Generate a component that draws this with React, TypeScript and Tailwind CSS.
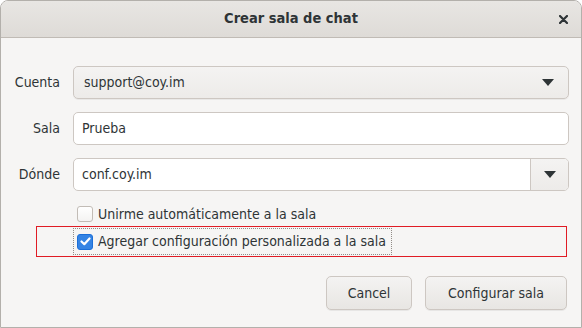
import React from 'react';

const font = { fontFamily: '"DejaVu Sans Condensed", "DejaVu Sans", sans-serif' };

function Arrow() {
    return (
        <svg width="12" height="7" viewBox="0 0 12 7">
            <path d="M0 0 L12 0 L6 7 Z" fill="#2e3436" />
        </svg>
    );
}

function Check() {
    return (
        <svg width="11" height="9" viewBox="0 0 11 9">
            <path d="M1.5 4.5 L4.3 7.2 L9.5 1.5" stroke="#fff" strokeWidth="2.2" fill="none" strokeLinecap="round" strokeLinejoin="round" />
        </svg>
    );
}

export default function App() {
    return (
        <div className="w-[582px] h-[328px] bg-white font-stretch-condensed" style={font}>
            <div className="h-full flex flex-col border border-[#b3b0ab] rounded-t-[8px] overflow-hidden bg-[#f6f5f4] text-[#2e3436]">
                {/* barra de titulo */}
                <div className="h-[37px] shrink-0 flex items-center justify-center relative bg-gradient-to-b from-[#e8e6e3] to-[#dedbd7] border-b border-[#c0bbb5]">
                    <span className="text-[14.5px] font-bold">Crear sala de chat</span>
                    <svg className="absolute right-[13px] top-[14px]" width="9" height="9" viewBox="0 0 9 9">
                        <path d="M1 1 L8 8 M8 1 L1 8" stroke="#2e3436" strokeWidth="2.2" strokeLinecap="round" />
                    </svg>
                </div>

                {/* formulario */}
                <div className="flex-1 flex flex-col pt-[28px] pr-[12px]">
                    <div className="grid grid-cols-[59px_1fr] gap-x-[13px] gap-y-[13px] items-center text-[14px]">
                        <span className="text-right">Cuenta</span>
                        <div className="h-[33px] flex items-center justify-between px-[10px] rounded-[5px] border border-[#cdc7c2] bg-gradient-to-b from-[#f4f3f2] to-[#edebe9] shadow-[0_1px_0_rgba(0,0,0,0.05)]">
                            <span>support@coy.im</span>
                            <span className="mr-[4px]"><Arrow /></span>
                        </div>

                        <span className="text-right">Sala</span>
                        <div className="h-[33px] flex items-center px-[8px] rounded-[5px] border border-[#cdc7c2] bg-white">
                            <span>Prueba</span>
                        </div>

                        <span className="text-right">Dónde</span>
                        <div className="h-[33px] flex items-stretch rounded-[5px] border border-[#cdc7c2] bg-white overflow-hidden">
                            <span className="flex-1 flex items-center px-[8px]">conf.coy.im</span>
                            <span className="w-[38px] flex items-center justify-center border-l border-[#cdc7c2] bg-gradient-to-b from-[#f4f3f2] to-[#edebe9]">
                                <Arrow />
                            </span>
                        </div>
                    </div>

                    <div className="mt-[15px] ml-[76px] h-[16px] flex items-center gap-[5px] text-[14px]">
                        <span className="w-[16px] h-[16px] rounded-[3px] border border-[#c2bcb6] bg-gradient-to-b from-white to-[#f4f3f2]" />
                        <span>Unirme automáticamente a la sala</span>
                    </div>

                    <div className="mt-[4px] ml-[35px] mr-[2px] h-[31px] flex items-center border border-[#e01b24]">
                        <div className="ml-[36px] h-[27px] flex items-center gap-[5px] pl-[3px] pr-[5px] border border-dotted border-[#918c87] text-[14px]">
                            <span className="w-[16px] h-[16px] rounded-[3px] bg-[#3584e4] border border-[#1c6fd8] flex items-center justify-center">
                                <Check />
                            </span>
                            <span>Agregar configuración personalizada a la sala</span>
                        </div>
                    </div>

                    <div className="mt-[19px] flex justify-end gap-[13px] pr-[2px] text-[14px]">
                        <button className="w-[86px] h-[34px] rounded-[5px] border border-[#cdc7c2] bg-gradient-to-b from-[#f4f3f2] to-[#e8e6e3] shadow-[0_1px_0_rgba(0,0,0,0.06)]">
                            Cancel
                        </button>
                        <button className="w-[142px] h-[34px] rounded-[5px] border border-[#cdc7c2] bg-gradient-to-b from-[#f4f3f2] to-[#e8e6e3] shadow-[0_1px_0_rgba(0,0,0,0.06)]">
                            Configurar sala
                        </button>
                    </div>
                </div>
            </div>
        </div>
    );
}
